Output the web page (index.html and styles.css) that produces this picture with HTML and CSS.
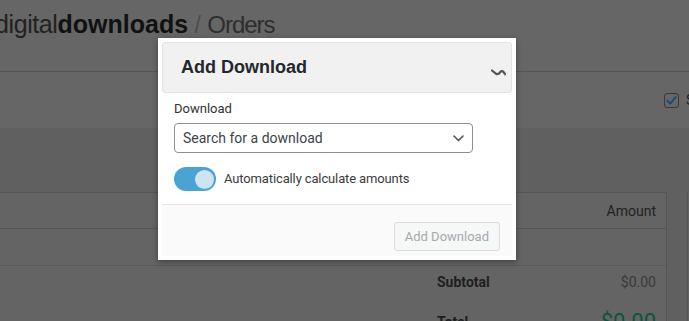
FILE: index.html
```html
<!DOCTYPE html>
<html lang="en">
<head>
<meta charset="utf-8">
<title>Orders</title>
<link rel="stylesheet" href="styles.css">
</head>
<body>
<div class="page">
  <header class="page-header">
    <h1 class="page-title"><span class="brand-light">digital</span><span class="brand-bold">downloads</span><span class="sep"> / </span><span class="crumb">Orders</span></h1>
  </header>
  <div class="toolbar">
    <label class="toolbar-check">
      <span class="checkbox">
        <svg width="13" height="13" viewBox="0 0 13 13"><path d="M2.5 6.8 L5.3 9.6 L10.6 3.2" fill="none" stroke="#1d4a73" stroke-width="2" stroke-linecap="round" stroke-linejoin="round"/></svg>
      </span>
      <span class="toolbar-label">Send Receipt</span>
    </label>
  </div>
  <main class="content">
    <section class="order-table">
      <div class="row row-head"><span class="col-amount">Amount</span></div>
      <div class="row row-empty"></div>
      <div class="totals">
        <div class="total-line"><span class="total-label">Subtotal</span><span class="total-value">$0.00</span></div>
        <div class="total-line total-grand"><span class="total-label">Total</span><span class="total-value grand">$0.00</span></div>
      </div>
    </section>
    <aside class="side-panel"></aside>
  </main>
</div>

<div class="modal">
  <div class="modal-header">
    <h2 class="modal-title">Add Download</h2>
    <svg class="modal-toggle" width="15" height="7" viewBox="0 0 15 7"><path d="M1 1.5 L5.5 5.2 L8 4.6 L10.3 2 L12 2.3 L14 5" fill="none" stroke="#555" stroke-width="2.2" stroke-linecap="round" stroke-linejoin="round"/></svg>
  </div>
  <div class="modal-body">
    <div class="field-label">Download</div>
    <div class="select">
      <span class="select-text">Search for a download</span>
      <svg width="11" height="7" viewBox="0 0 11 7"><path d="M1 1 L5.5 5.5 L10 1" fill="none" stroke="#50575e" stroke-width="1.6" stroke-linecap="round" stroke-linejoin="round"/></svg>
    </div>
    <div class="toggle-row">
      <span class="toggle"><span class="knob"></span></span>
      <span class="toggle-label">Automatically calculate amounts</span>
    </div>
  </div>
  <div class="modal-footer">
    <button class="btn-disabled" disabled>Add Download</button>
  </div>
</div>
</body>
</html>
```

FILE: styles.css
```css
html, body {
  margin: 0;
  padding: 0;
}
body {
  width: 689px;
  height: 321px;
  overflow: hidden;
  background: #606060;
  font-family: Roboto, "Liberation Sans", sans-serif;
  position: relative;
}
.page {
  width: 689px;
}
.page-header {
  background: #666666;
  border-bottom: 1px solid #555555;
  padding-top: 10px;
  box-sizing: border-box;
  height: 72px;
}
.page-title {
  margin: 0 0 0 -5px;
  font-family: "Liberation Sans", Arial, sans-serif;
  font-size: 25px;
  line-height: 29px;
  font-weight: normal;
  white-space: nowrap;
}
.brand-light {
  color: #222222;
  letter-spacing: -0.4px;
}
.brand-bold {
  color: #111111;
  font-weight: bold;
}
.sep {
  color: #4c4c4c;
  font-size: 23px;
}
.crumb {
  color: #2e2e2e;
  font-size: 24px;
  letter-spacing: -1px;
}
.toolbar {
  height: 56px;
  background: #666666;
  display: flex;
  justify-content: flex-end;
  align-items: center;
}
.toolbar-check {
  display: flex;
  align-items: center;
  gap: 7px;
  margin-right: -81px;
}
.checkbox {
  width: 13px;
  height: 13px;
  border: 1px solid #3a3a3a;
  border-radius: 3px;
  background: #666;
  display: flex;
  align-items: center;
  justify-content: center;
}
.toolbar-label {
  font-size: 14px;
  color: #1e1e1e;
  white-space: nowrap;
  width: 84px;
}
.content {
  display: flex;
  gap: 20px;
  padding-top: 64px;
  margin-left: -1px;
}
.order-table {
  width: 666px;
  flex: none;
  background: #646464;
  border: 1px solid #555555;
  height: 200px;
}
.row {
  display: flex;
  justify-content: flex-end;
  align-items: center;
  padding-right: 10px;
}
.row-head {
  height: 35px;
  border-bottom: 1px solid #555555;
}
.col-amount {
  font-size: 14px;
  line-height: 16px;
  color: #222222;
}
.row-empty {
  height: 36px;
  border-bottom: 1px solid #5a5a5a;
}
.totals {
  margin-left: 437px;
  padding-right: 10px;
}
.total-line {
  display: flex;
  justify-content: space-between;
  align-items: center;
  height: 32px;
}
.total-label {
  font-size: 14px;
  line-height: 16px;
  font-weight: bold;
  color: #1e1e1e;
}
.total-value {
  font-size: 14px;
  line-height: 16px;
  color: #3a3a3a;
}
.total-grand {
  height: 48px;
}
.total-value.grand {
  font-size: 22px;
  line-height: 26px;
  color: #0b5540;
}
.side-panel {
  flex: 1;
  height: 200px;
  border-left: 1px solid #555555;
  background: #646464;
}

/* Modal dialog lying over the page */
.modal {
  position: absolute;
  left: 158px;
  top: 38px;
  width: 358px;
  box-sizing: border-box;
  padding: 4px;
  background: #ffffff;
  box-shadow: 0 2px 6px rgba(0, 0, 0, 0.35);
}
.modal-header {
  height: 51px;
  box-sizing: border-box;
  border: 1px solid #e3e3e3;
  border-radius: 3px;
  background: #f1f1f1;
  display: flex;
  align-items: center;
  justify-content: space-between;
  padding: 0 5px 0 18px;
}
.modal-title {
  margin: 0;
  font-family: "Liberation Sans", Arial, sans-serif;
  font-size: 18px;
  line-height: 21px;
  font-weight: bold;
  color: #23282d;
}
.modal-toggle {
  margin-top: 9px;
}
.modal-body {
  padding: 8px 12px 13px;
  border-bottom: 1px solid #e6e6e6;
}
.field-label {
  font-size: 13px;
  line-height: 16px;
  color: #333333;
  margin-bottom: 6px;
}
.select {
  height: 30px;
  width: 299px;
  box-sizing: border-box;
  border: 1px solid #8c8f94;
  border-radius: 4px;
  display: flex;
  align-items: center;
  justify-content: space-between;
  padding: 0 8px 0 8px;
}
.select-text {
  font-size: 14px;
  line-height: 16px;
  color: #3c434a;
}
.toggle-row {
  margin-top: 14px;
  display: flex;
  align-items: center;
  gap: 8px;
}
.toggle {
  width: 42px;
  height: 24px;
  border-radius: 12px;
  background: #4ba3d3;
  display: flex;
  align-items: center;
  justify-content: flex-end;
  padding-right: 2px;
  box-sizing: border-box;
}
.knob {
  width: 19px;
  height: 19px;
  border-radius: 50%;
  background: #cde4f1;
}
.toggle-label {
  font-size: 13px;
  line-height: 16px;
  color: #3c3c3c;
  letter-spacing: -0.13px;
}
.modal-footer {
  background: #fafafa;
  display: flex;
  justify-content: flex-end;
  padding: 17px 12px 5px;
}
.btn-disabled {
  height: 29px;
  padding: 0 10px;
  border: 1px solid #dcdcde;
  border-radius: 3px;
  background: #f6f7f7;
  color: #a7aaad;
  font-family: Roboto, sans-serif;
  font-size: 13px;
  line-height: 16px;
}
```
